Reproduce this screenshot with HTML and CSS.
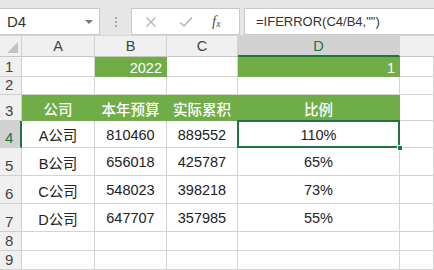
FILE: index.html
```html
<!DOCTYPE html>
<html>
<head>
<meta charset="utf-8">
<link rel="stylesheet" href="styles.css">
</head>
<body>
<div class="app">
  <div class="fbar">
    <div class="namebox"><span>D4</span><span class="caret"></span></div>
    <div class="dots"><i></i><i></i><i></i></div>
    <div class="btns">
      <svg class="ic" width="12" height="12" viewBox="0 0 12 12"><path d="M1.5 1.5 L10.5 10.5 M10.5 1.5 L1.5 10.5" stroke="#b4b4b4" stroke-width="1.4" fill="none"/></svg>
      <svg class="ic" width="14" height="12" viewBox="0 0 14 12"><path d="M1 6.5 L5 10 L13 1.5" stroke="#b4b4b4" stroke-width="1.6" fill="none"/></svg>
      <span class="fx">f<sub>x</sub></span>
    </div>
    <div class="formula">=IFERROR(C4/B4,"")</div>
  </div>
  <div class="strip"></div>
  <div class="sheet">
    <div class="corner"><span class="tri"></span></div>
    <div class="ch">A</div>
    <div class="ch">B</div>
    <div class="ch">C</div>
    <div class="ch sel">D</div>
    <div class="ch last"></div>

    <div class="rh">1</div>
    <div class="c"></div>
    <div class="c g r">2022</div>
    <div class="c"></div>
    <div class="c g r">1</div>
    <div class="c"></div>

    <div class="rh">2</div>
    <div class="c"></div><div class="c"></div><div class="c"></div><div class="c"></div><div class="c"></div>

    <div class="rh">3</div>
    <div class="c g h">公司</div>
    <div class="c g h">本年预算</div>
    <div class="c g h">实际累积</div>
    <div class="c g h">比例</div>
    <div class="c"></div>

    <div class="rh rsel">4</div>
    <div class="c m">A公司</div>
    <div class="c m">810460</div>
    <div class="c m">889552</div>
    <div class="c m active">110%<span class="selbox"></span><span class="handle"></span></div>
    <div class="c"></div>

    <div class="rh">5</div>
    <div class="c m">B公司</div>
    <div class="c m">656018</div>
    <div class="c m">425787</div>
    <div class="c m">65%</div>
    <div class="c"></div>

    <div class="rh">6</div>
    <div class="c m">C公司</div>
    <div class="c m">548023</div>
    <div class="c m">398218</div>
    <div class="c m">73%</div>
    <div class="c"></div>

    <div class="rh">7</div>
    <div class="c m">D公司</div>
    <div class="c m">647707</div>
    <div class="c m">357985</div>
    <div class="c m">55%</div>
    <div class="c"></div>

    <div class="rh">8</div>
    <div class="c"></div><div class="c"></div><div class="c"></div><div class="c"></div><div class="c"></div>

    <div class="rh">9</div>
    <div class="c"></div><div class="c"></div><div class="c"></div><div class="c"></div><div class="c"></div>
  </div>
</div>
</body>
</html>
```

FILE: styles.css
```css
* { box-sizing: border-box; }
html, body { margin: 0; padding: 0; }
body {
  width: 434px;
  height: 270px;
  overflow: hidden;
  background: #ffffff;
  font-family: "Liberation Sans", "Noto Sans CJK SC", sans-serif;
  color: #222;
}
.app { display: flex; flex-direction: column; height: 270px; }
.fbar {
  height: 38px;
  background: #e6e6e6;
  display: flex;
  align-items: flex-start;
  padding-top: 8px;
  border-bottom: 1px solid #d6d6d6;
}
.namebox {
  margin-left: -1px;
  width: 101px;
  height: 27px;
  background: #fff;
  border: 1px solid #c8c8c8;
  display: flex;
  align-items: center;
  justify-content: space-between;
  padding: 0 6px 0 7px;
  font-size: 15px;
  color: #333;
}
.caret {
  width: 0; height: 0;
  border-left: 4px solid transparent;
  border-right: 4px solid transparent;
  border-top: 4px solid #777;
}
.dots {
  width: 31px;
  height: 27px;
  display: flex;
  flex-direction: column;
  align-items: center;
  justify-content: center;
  gap: 2px;
}
.dots i { display: block; width: 2px; height: 2px; background: #a8a8a8; }
.btns {
  width: 109px;
  height: 27px;
  background: #fff;
  border: 1px solid #c8c8c8;
  display: flex;
  align-items: center;
  padding-left: 13px;
  gap: 22px;
}
.fx {
  font-family: "Liberation Serif", serif;
  font-style: italic;
  font-size: 15px;
  color: #555;
  margin-left: -3px;
}
.fx sub { font-size: 10px; vertical-align: -1px; }
.formula {
  margin-left: 4px;
  flex: 1;
  height: 27px;
  background: #fff;
  border: 1px solid #c8c8c8;
  border-right: none;
  display: flex;
  align-items: center;
  padding-left: 11px;
  font-size: 13px;
  color: #333;
}
.strip { height: 5px; background: #f3f3f3; }
.sheet {
  flex: 1;
  display: grid;
  grid-template-columns: 22px 73px 72px 71px 162px 1fr;
  grid-template-rows: 21px 20px 18px 26px 27px 28px 28px 28px 19px 1fr;
  font-size: 14.5px;
}
.corner, .ch, .rh {
  background: #f0f0f0;
  color: #444;
  border-right: 1px solid #d0d0d0;
  border-bottom: 1px solid #c6c6c6;
}
.corner { position: relative; }
.tri {
  position: absolute;
  right: 3px; bottom: 3px;
  width: 0; height: 0;
  border-left: 11px solid transparent;
  border-bottom: 11px solid #c2c2c2;
}
.ch {
  display: flex;
  align-items: center;
  justify-content: center;
  font-size: 14.5px;
}
.ch.sel {
  background: #d2d2d2;
  color: #217346;
  border-bottom: 2px solid #217346;
}
.ch.last { border-right: none; }
.rh {
  display: flex;
  align-items: flex-end;
  padding-left: 5px;
  padding-bottom: 1px;
  font-size: 15px;
  border-bottom: 1px solid #d0d0d0;
}
.rh.rsel {
  background: #d2d2d2;
  color: #217346;
  border-right: 2px solid #217346;
}
.c {
  border-right: 1px solid #d4d4d4;
  border-bottom: 1px solid #d4d4d4;
  display: flex;
  align-items: center;
  white-space: nowrap;
}
.c.g {
  background: #70ad47;
  color: #fff;
  border-color: #70ad47;
}
.c.r { justify-content: flex-end; padding-right: 4px; padding-top: 2px; }
.c.h {
  justify-content: center;
  font-weight: 500;
  font-family: "Noto Sans CJK SC", sans-serif;
  font-size: 14.5px;
  padding-top: 2px;
}
.c.m { justify-content: center; color: #222; padding-top: 1px; }
.c.active { position: relative; }
.selbox {
  position: absolute;
  left: -1px; top: -1px; right: -1px; bottom: -1px;
  border: 2px solid #217346;
}
.handle {
  position: absolute;
  right: -4px; bottom: -4px;
  width: 6px; height: 6px;
  background: #217346;
  border: 1px solid #fff;
}
```
